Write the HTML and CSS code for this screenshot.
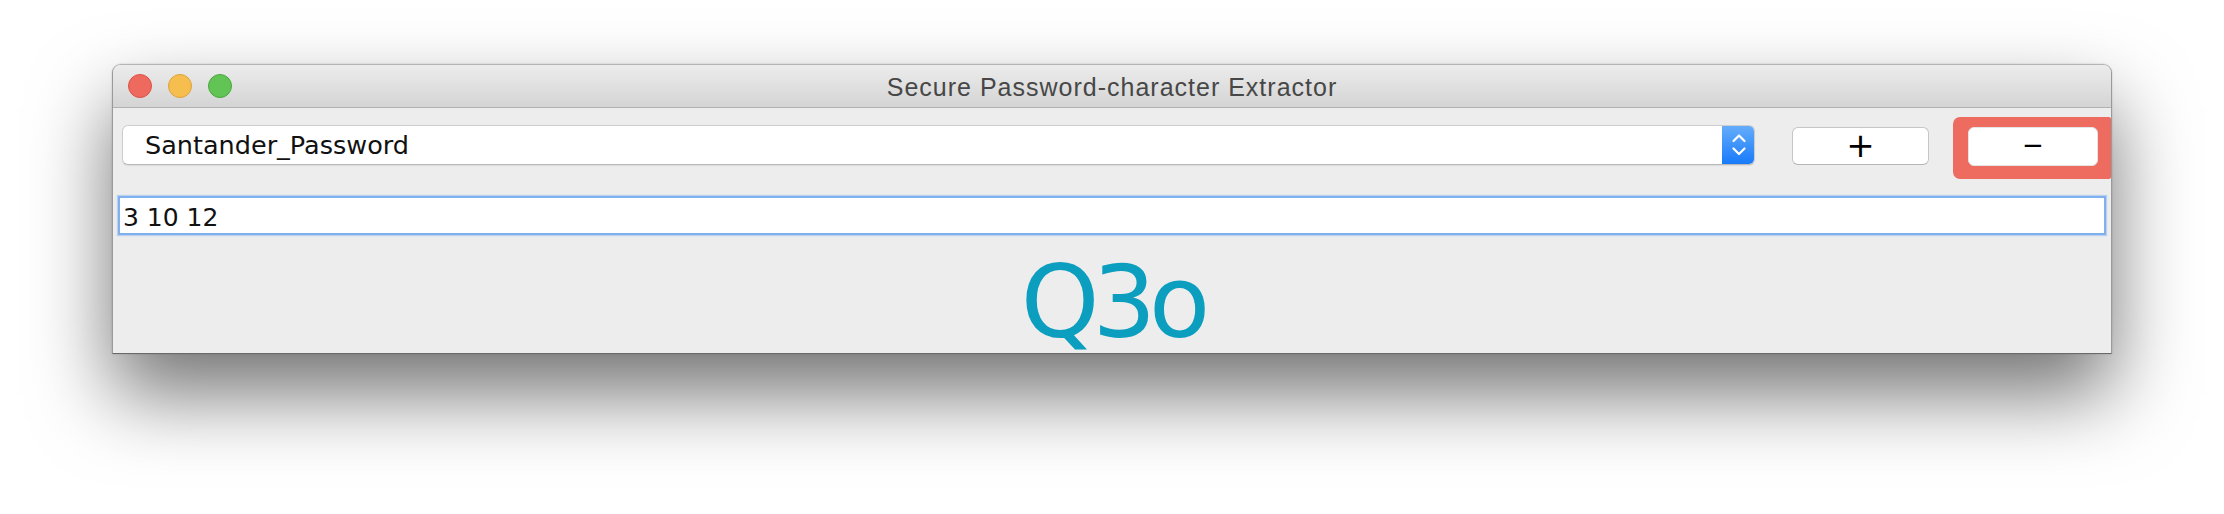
FILE: index.html
```html
<!DOCTYPE html>
<html>
<head>
<meta charset="utf-8">
<title>Secure Password-character Extractor</title>
<link rel="stylesheet" href="styles.css">
</head>
<body>
<div class="window">
  <div class="titlebar">
    <div class="lights">
      <span class="light red"></span>
      <span class="light yellow"></span>
      <span class="light green"></span>
    </div>
    <div class="title">Secure Password-character Extractor</div>
    <div></div>
  </div>
  <div class="content">
    <div class="row">
      <div class="combo">
        <span class="combo-text">Santander_Password</span>
        <span class="stepper">
          <svg width="33" height="40" viewBox="0 0 33 40">
            <polyline points="11.5,16 17,10.5 22.5,16" fill="none" stroke="#fff" stroke-width="2.2" stroke-linecap="round" stroke-linejoin="round"/>
            <polyline points="11.5,23.5 17,29 22.5,23.5" fill="none" stroke="#fff" stroke-width="2.2" stroke-linecap="round" stroke-linejoin="round"/>
          </svg>
        </span>
      </div>
      <div class="btn plus">+</div>
      <div class="highlight">
        <div class="btn minus">−</div>
      </div>
    </div>
    <div class="field">3 10 12</div>
    <div class="result">Q3o</div>
  </div>
</div>
</body>
</html>
```
FILE: styles.css
```css
html, body {
  margin: 0;
  padding: 0;
  background: #ffffff;
}
body {
  width: 2224px;
  height: 514px;
  overflow: hidden;
  padding-top: 64px;
  box-sizing: border-box;
}
.window {
  width: 2000px;
  margin-left: 112px;
  box-sizing: border-box;
  border: 1px solid #b4b4b4;
  border-bottom-color: #6a6a6a;
  border-left-color: #9a9a9a;
  border-right-color: #9a9a9a;
  border-radius: 9px 9px 0 0;
  background: #ededed;
  box-shadow: 0 40px 80px rgba(0, 0, 0, 0.55), 0 0 2px rgba(0,0,0,0.2);
}
.titlebar {
  height: 42px;
  border-bottom: 1px solid #b2b2b2;
  border-radius: 8px 8px 0 0;
  background: linear-gradient(#ececec, #d4d4d4);
  display: grid;
  grid-template-columns: 1fr auto 1fr;
  align-items: center;
}
.lights {
  display: flex;
  gap: 16px;
  padding-left: 15px;
}
.light {
  width: 24px;
  height: 24px;
  border-radius: 50%;
  box-sizing: border-box;
}
.light.red { background: #ee6a5e; border: 1px solid #dc5145; }
.light.yellow { background: #f6be4f; border: 1px solid #dea236; }
.light.green { background: #61c454; border: 1px solid #4aa83c; }
.title {
  font-family: "Liberation Sans", Arial, sans-serif;
  font-size: 25px;
  letter-spacing: 1px;
  color: #474747;
  padding-top: 3px;
  white-space: nowrap;
}
.content {
  display: flex;
  flex-direction: column;
}
.row {
  display: flex;
  align-items: flex-start;
  padding: 9px 0 0 9px;
}
.combo {
  flex: 1;
  height: 40px;
  margin-top: 8px;
  box-sizing: border-box;
  display: flex;
  background: #ffffff;
  border: 1px solid #cdcdcd;
  border-bottom-color: #b9b9b9;
  border-radius: 6px;
  box-shadow: 0 1px 1px rgba(0,0,0,0.08);
  overflow: hidden;
}
.combo-text {
  flex: 1;
  font-family: "DejaVu Sans", sans-serif;
  font-size: 25.5px;
  line-height: 38px;
  padding-left: 22px;
  color: #111;
}
.stepper {
  width: 33px;
  margin: -1px -1px -1px 0;
  background: linear-gradient(#67aefb, #1679fa);
  border-radius: 0 6px 6px 0;
  display: flex;
}
.btn {
  box-sizing: border-box;
  background: #ffffff;
  border: 1px solid #c6c6c6;
  border-bottom-color: #b5b5b5;
  border-radius: 6px;
  display: flex;
  align-items: center;
  justify-content: center;
  font-family: "DejaVu Sans", sans-serif;
  color: #000;
}
.plus {
  width: 137px;
  height: 38px;
  margin: 10px 24px 0 37px;
  font-size: 34px;
  line-height: 1;
  padding-bottom: 2px;
}
.highlight {
  width: 158px;
  box-sizing: border-box;
  padding: 10px 13px 13px 15px;
  background: #ed6b5f;
  border-radius: 7px 2px 2px 7px;
}
.minus {
  width: 130px;
  height: 39px;
  font-size: 26px;
  line-height: 1;
  border-color: #e4e4e4;
  padding-bottom: 3px;
}
.field {
  margin: 17px 5px 0 5px;
  height: 39px;
  box-sizing: border-box;
  background: #ffffff;
  border: 2px solid #7eb0ed;
  box-shadow: 0 0 1px 1px rgba(126, 176, 237, 0.45);
  font-family: "DejaVu Sans", sans-serif;
  font-size: 25px;
  line-height: 30px;
  padding: 5px 0 0 3px;
  color: #111;
}
.result {
  margin-top: 18px;
  height: 100px;
  text-align: center;
  font-family: "DejaVu Sans", sans-serif;
  font-size: 100px;
  line-height: 100px;
  letter-spacing: -7px;
  color: #0b9ebf;
}
```
